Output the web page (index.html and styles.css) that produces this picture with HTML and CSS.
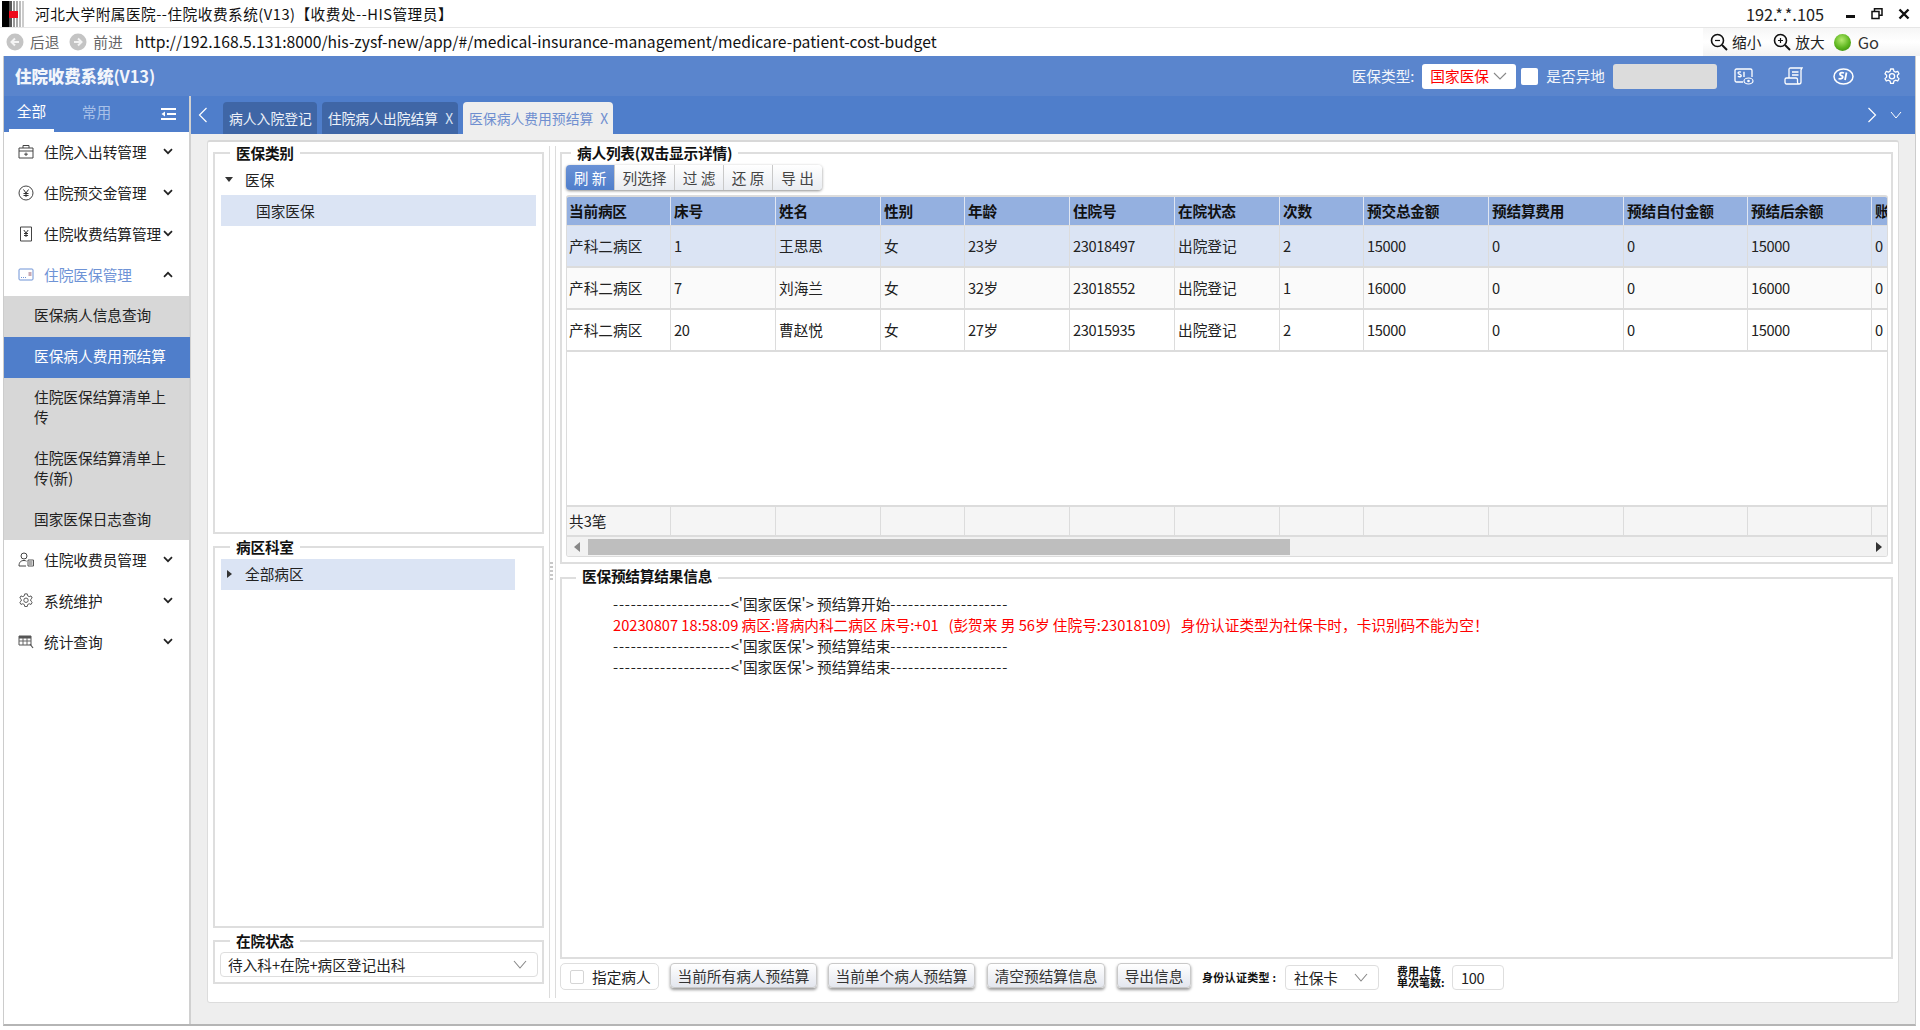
FILE: index.html
```html
<!DOCTYPE html>
<html lang="zh">
<head>
<meta charset="utf-8">
<title>住院收费系统</title>
<link rel="stylesheet" href="styles.css">
</head>
<body>
<div class="titlebar">
  <svg class="logo" width="24" height="26" viewBox="0 0 24 26"><rect x="0" y="0" width="7" height="26" fill="#000"/><rect x="7" width="3" height="26" fill="#555"/><rect x="11" width="2" height="26" fill="#999"/><rect x="14" width="2" height="26" fill="#aaa"/><rect x="17" width="2" height="26" fill="#bbb"/><rect x="20" width="2" height="26" fill="#ccc"/><rect x="7" y="10" width="9" height="7" fill="#ee0a1c"/></svg>
  <span class="win-title">河北大学附属医院--住院收费系统(V13)【收费处--HIS管理员】</span>
  <span class="win-ip">192.*.*.105</span>
  <div class="win-ctrl">
    <svg width="10" height="10" viewBox="0 0 10 10"><rect x="0" y="6" width="9" height="3" fill="#111"/></svg>
    <svg width="12" height="12" viewBox="0 0 12 12"><path d="M3.5 3V.8h7.500v6.500H8.500M1 3.500h7v7H1z" fill="none" stroke="#111" stroke-width="1.500"/></svg>
    <svg width="12" height="12" viewBox="0 0 12 12"><path d="M1.500 1.500l9 9M10.500 1.500l-9 9" stroke="#111" stroke-width="2.400"/></svg>
  </div>
</div>
<div class="addrbar">
  <div class="nav-item"><svg width="18" height="18" viewBox="0 0 18 18"><circle cx="9" cy="9" r="8.500" fill="#c4c4c4"/><path d="M13 9H6M9 5.500L5.500 9 9 12.500" fill="none" stroke="#f4f4f4" stroke-width="2"/></svg><span>后退</span></div>
  <div class="nav-item"><svg width="18" height="18" viewBox="0 0 18 18"><circle cx="9" cy="9" r="8.500" fill="#c4c4c4"/><path d="M5 9h7M9 5.500L12.500 9 9 12.500" fill="none" stroke="#f4f4f4" stroke-width="2"/></svg><span>前进</span></div>
  <span class="url">http://192.168.5.131:8000/his-zysf-new/app/#/medical-insurance-management/medicare-patient-cost-budget</span>
  <div class="addr-tools">
    <svg width="18" height="18" viewBox="0 0 18 18"><circle cx="7.500" cy="7.500" r="6" fill="none" stroke="#111" stroke-width="1.600"/><path d="M12 12l5 5" stroke="#111" stroke-width="2"/><path d="M5 7.500h5" stroke="#111" stroke-width="1.200"/></svg><span class="tool-label">缩小</span>
    <svg class="tool-gap" width="18" height="18" viewBox="0 0 18 18"><circle cx="7.500" cy="7.500" r="6" fill="none" stroke="#111" stroke-width="1.600"/><path d="M12 12l5 5" stroke="#111" stroke-width="2"/><path d="M5 7.500h5M7.500 5v5" stroke="#111" stroke-width="1.200"/></svg><span class="tool-label">放大</span>
    <span class="go-ball"></span><span class="tool-go">Go</span>
  </div>
</div>
<div class="app">
  <header class="app-head">
    <div class="app-title"><b>住院收费系统</b>(V13)</div>
    <div class="head-right">
      <span class="head-label">医保类型:</span>
      <div class="head-select"><span>国家医保</span><svg width="14" height="8" viewBox="0 0 14 8"><path d="M1 1l6 6 6-6" fill="none" stroke="#888" stroke-width="1.100"/></svg></div>
      <span class="head-check"></span>
      <span class="head-label">是否异地</span>
      <span class="head-input"></span>
      <svg class="head-icon first" width="20" height="17" viewBox="0 0 20 17"><path d="M9 14H2.500A1.500 1.500 0 0 1 1 12.500v-10A1.500 1.500 0 0 1 2.500 1h14A1.500 1.500 0 0 1 18 2.500V9" fill="none" stroke="#fff" stroke-width="1.300"/><ellipse cx="14.500" cy="13" rx="4.500" ry="3" fill="#5a85cd" stroke="#fff" stroke-width="1.200"/><circle cx="14.500" cy="13" r="1.300" fill="#fff"/><path d="M7 4.200C5 3.400 3.800 4.200 4.200 5.300c.5 1.100 2.800 1 3 2.200.2 1.200-1.700 1.700-3.400.9M10 3.800v5.200" fill="none" stroke="#fff" stroke-width="1.400"/></svg>
      <svg class="head-icon" width="19" height="18" viewBox="0 0 19 18"><path d="M5 11V2.500C5 1.500 5.500 1 6.500 1H18l-1 2v12c0 1.500-1 2-2 2H2.500C1.500 17 1 16 1 15v-2.500c0-1 .5-1.500 1.500-1.500H12c1 0 1.500.5 1.500 1.500V15c0 1 .5 2 1.500 2" fill="none" stroke="#fff" stroke-width="1.300"/><path d="M8 5h6.500M8 8h6.500" stroke="#fff" stroke-width="1.300"/></svg>
      <svg class="head-icon" width="21" height="17" viewBox="0 0 21 17"><ellipse cx="10.500" cy="8.500" rx="9.500" ry="7.500" fill="none" stroke="#fff" stroke-width="1.500"/><path d="M11 5C8.500 4 6.500 5 7 6.500c.4 1.300 3 1.200 2.800 2.700C9.600 10.800 7 11.200 5.500 10.500M13.500 4.500L12 12" fill="none" stroke="#fff" stroke-width="1.800"/></svg>
      <svg class="head-icon" width="16" height="17" viewBox="0 0 16 17"><path d="M6.600 1h2.800l.5 2.200 1.700.9 2.100-.8 1.300 2.400-1.600 1.500v1.900l1.600 1.500-1.300 2.400-2.100-.8-1.700.9-.5 2.200H6.600l-.5-2.200-1.700-.9-2.100.8L1 10.600l1.600-1.500V7.200L1 5.700l1.300-2.400 2.100.8 1.700-.9z" fill="none" stroke="#fff" stroke-width="1.300" stroke-linejoin="round"/><circle cx="8" cy="8.200" r="2.600" fill="none" stroke="#fff" stroke-width="1.300"/></svg>
    </div>
  </header>
  <div class="app-body">
    <aside class="sidebar">
      <div class="side-tabs">
        <span class="side-tab on">全部</span>
        <span class="side-tab">常用</span>
        <svg class="side-burger" width="15" height="14" viewBox="0 0 15 14"><path d="M0 2h15M6 7h9M0 12h15" stroke="#fff" stroke-width="2"/><path d="M4 4.500L0.500 7 4 9.500z" fill="#fff"/></svg>
      </div>
      <nav class="menu">
        <div class="menu-item">
          <svg class="menu-icon" width="16" height="15" viewBox="0 0 16 15"><path d="M1 4h14v10H1zM5 4V1.500h6V4M1 7h14M8 8.500v3.500M6.200 10.200h3.600" fill="none" stroke="#444" stroke-width="1"/></svg>
          <span>住院入出转管理</span>
          <svg class="menu-chev" width="10" height="7" viewBox="0 0 10 7"><path d="M1 1.200l4 4 4-4" fill="none" stroke="#222" stroke-width="1.700"/></svg>
        </div>
        <div class="menu-item">
          <svg class="menu-icon" width="16" height="16" viewBox="0 0 16 16"><circle cx="8" cy="8" r="7" fill="none" stroke="#444" stroke-width="1"/><path d="M5.500 4.500L8 8l2.500-3.500M8 8v4M5.500 8.500h5M5.500 10.500h5" fill="none" stroke="#333" stroke-width="1"/></svg>
          <span>住院预交金管理</span>
          <svg class="menu-chev" width="10" height="7" viewBox="0 0 10 7"><path d="M1 1.200l4 4 4-4" fill="none" stroke="#222" stroke-width="1.700"/></svg>
        </div>
        <div class="menu-item">
          <svg class="menu-icon" width="16" height="16" viewBox="0 0 16 16"><path d="M2.500 1h11v14h-11z" fill="none" stroke="#444" stroke-width="1"/><path d="M5.800 4L8 7l2.200-3M8 7v4M6 7.500h4M6 9.500h4" fill="none" stroke="#333" stroke-width="1"/></svg>
          <span>住院收费结算管理</span>
          <svg class="menu-chev" width="10" height="7" viewBox="0 0 10 7"><path d="M1 1.200l4 4 4-4" fill="none" stroke="#222" stroke-width="1.700"/></svg>
        </div>
        <div class="menu-item open">
          <svg class="menu-icon" width="16" height="13" viewBox="0 0 16 13"><rect x="1" y="1" width="14" height="11" rx="1" fill="none" stroke="#6e93d6" stroke-width="1"/><path d="M3 9.500h5" stroke="#6e93d6" stroke-dasharray="1 1"/><rect x="10.500" y="4" width="3" height="4" fill="#c8a9b4"/></svg>
          <span>住院医保管理</span>
          <svg class="menu-chev" width="10" height="7" viewBox="0 0 10 7"><path d="M1 5.800l4-4 4 4" fill="none" stroke="#222" stroke-width="1.700"/></svg>
        </div>
        <div class="submenu">
          <div class="sub-item">医保病人信息查询</div>
          <div class="sub-item on">医保病人费用预结算</div>
          <div class="sub-item">住院医保结算清单上传</div>
          <div class="sub-item">住院医保结算清单上传(新)</div>
          <div class="sub-item last">国家医保日志查询</div>
        </div>
        <div class="menu-item">
          <svg class="menu-icon" width="16" height="15" viewBox="0 0 16 15"><circle cx="6" cy="4" r="3" fill="none" stroke="#444" stroke-width="1"/><path d="M1 14c0-4 2-5.500 5-5.500 1 0 2 .2 2.500.7M1 14h7" fill="none" stroke="#444" stroke-width="1"/><path d="M10 8h5.500v6H10zM11 10h3.500M11 12h3.500" fill="none" stroke="#555" stroke-width="1"/></svg>
          <span>住院收费员管理</span>
          <svg class="menu-chev" width="10" height="7" viewBox="0 0 10 7"><path d="M1 1.200l4 4 4-4" fill="none" stroke="#222" stroke-width="1.700"/></svg>
        </div>
        <div class="menu-item">
          <svg class="menu-icon" width="15" height="15" viewBox="0 0 16 17"><path d="M6.600 1h2.800l.5 2.200 1.700.9 2.100-.8 1.300 2.400-1.600 1.500v1.900l1.600 1.500-1.300 2.400-2.100-.8-1.700.9-.5 2.200H6.600l-.5-2.200-1.700-.9-2.100.8L1 10.600l1.600-1.500V7.200L1 5.700l1.300-2.400 2.100.8 1.700-.9z" fill="none" stroke="#555" stroke-width="1.100"/><circle cx="8" cy="8.200" r="2.500" fill="none" stroke="#555" stroke-width="1.100"/></svg>
          <span>系统维护</span>
          <svg class="menu-chev" width="10" height="7" viewBox="0 0 10 7"><path d="M1 1.200l4 4 4-4" fill="none" stroke="#222" stroke-width="1.700"/></svg>
        </div>
        <div class="menu-item">
          <svg class="menu-icon" width="16" height="14" viewBox="0 0 16 14"><path d="M1 1h12v9H1z" fill="none" stroke="#555" stroke-width="1"/><path d="M1 1h12v2.500H1z" fill="#555"/><path d="M1 6h12M5 3v7M9 3v7" stroke="#666" stroke-width="1"/><path d="M12 9l3 4" stroke="#555" stroke-width="1.200"/></svg>
          <span>统计查询</span>
          <svg class="menu-chev" width="10" height="7" viewBox="0 0 10 7"><path d="M1 1.200l4 4 4-4" fill="none" stroke="#222" stroke-width="1.700"/></svg>
        </div>
      </nav>
    </aside>
    <main class="main">
      <div class="tabstrip">
        <svg class="tab-prev" width="10" height="16" viewBox="0 0 10 16"><path d="M8.500 1L1.500 8l7 7" fill="none" stroke="#fff" stroke-width="1.200"/></svg>
        <div class="tab">病人入院登记</div>
        <div class="tab">住院病人出院结算<i>X</i></div>
        <div class="tab active">医保病人费用预结算<i>X</i></div>
        <div class="tab-end">
          <svg width="10" height="16" viewBox="0 0 10 16"><path d="M1.500 1l7 7-7 7" fill="none" stroke="#fff" stroke-width="1.200"/></svg>
          <svg width="12" height="8" viewBox="0 0 12 8"><path d="M1 1l5 6 5-6" fill="none" stroke="#fff" stroke-width="1"/></svg>
        </div>
      </div>
      <div class="card">
        <div class="col-left">
          <section class="group g-type">
            <h3 class="legend">医保类别</h3>
            <div class="tree-row"><span class="tri-down"></span><span>医保</span></div>
            <div class="tree-row sel indent">国家医保</div>
          </section>
          <section class="group g-ward">
            <h3 class="legend">病区科室</h3>
            <div class="ward-row"><span class="tri-right"></span><span>全部病区</span></div>
          </section>
          <section class="group g-state">
            <h3 class="legend">在院状态</h3>
            <div class="field state-field"><span>待入科+在院+病区登记出科</span><svg width="14" height="9" viewBox="0 0 14 9"><path d="M1 1l6 7 6-7" fill="none" stroke="#888" stroke-width="1.100"/></svg></div>
          </section>
        </div>
        <div class="splitter"><span class="grip"></span></div>
        <div class="col-right">
          <section class="group g-list">
            <h3 class="legend">病人列表(双击显示详情)</h3>
            <div class="toolbar">
              <button class="tb on w1">刷 新</button><button class="tb w2">列选择</button><button class="tb w1">过 滤</button><button class="tb w1">还 原</button><button class="tb w1">导 出</button>
            </div>
            <div class="grid">
              <div class="g-row head"><span>当前病区</span><span>床号</span><span>姓名</span><span>性别</span><span>年龄</span><span>住院号</span><span>在院状态</span><span>次数</span><span>预交总金额</span><span>预结算费用</span><span>预结自付金额</span><span>预结后余额</span><span>账</span></div>
              <div class="g-row r1"><span>产科二病区</span><span class="num">1</span><span>王思思</span><span>女</span><span class="num">23岁</span><span class="num">23018497</span><span>出院登记</span><span class="num">2</span><span class="num">15000</span><span class="num">0</span><span class="num">0</span><span class="num">15000</span><span class="num">0</span></div>
              <div class="g-row r2"><span>产科二病区</span><span class="num">7</span><span>刘海兰</span><span>女</span><span class="num">32岁</span><span class="num">23018552</span><span>出院登记</span><span class="num">1</span><span class="num">16000</span><span class="num">0</span><span class="num">0</span><span class="num">16000</span><span class="num">0</span></div>
              <div class="g-row r3"><span>产科二病区</span><span class="num">20</span><span>曹赵悦</span><span>女</span><span class="num">27岁</span><span class="num">23015935</span><span>出院登记</span><span class="num">2</span><span class="num">15000</span><span class="num">0</span><span class="num">0</span><span class="num">15000</span><span class="num">0</span></div>
              <div class="g-empty"></div>
              <div class="g-row sum"><span>共3笔</span><span></span><span></span><span></span><span></span><span></span><span></span><span></span><span></span><span></span><span></span><span></span><span></span></div>
              <div class="hscroll">
                <svg width="6" height="10" viewBox="0 0 6 10"><path d="M6 0v10L0 5z" fill="#888"/></svg>
                <div class="thumb-track"><div class="thumb"></div></div>
                <svg width="6" height="10" viewBox="0 0 6 10"><path d="M0 0v10l6-5z" fill="#333"/></svg>
              </div>
            </div>
          </section>
          <section class="group g-log">
            <h3 class="legend">医保预结算结果信息</h3>
            <div class="log">
              <div class="log-line"><span class="dash">--------------------</span>&lt;'国家医保'&gt; 预结算开始<span class="dash">--------------------</span></div>
              <div class="log-line err">20230807 18:58:09 病区:肾病内科二病区 床号:+01   (彭贺来 男 56岁 住院号:23018109)   身份认证类型为社保卡时，卡识别码不能为空！</div>
              <div class="log-line"><span class="dash">--------------------</span>&lt;'国家医保'&gt; 预结算结束<span class="dash">--------------------</span></div>
              <div class="log-line"><span class="dash">--------------------</span>&lt;'国家医保'&gt; 预结算结束<span class="dash">--------------------</span></div>
            </div>
          </section>
          <div class="actions">
            <label class="assign"><span class="box"></span><span>指定病人</span></label>
            <button class="act a1">当前所有病人预结算</button>
            <button class="act a1">当前单个病人预结算</button>
            <button class="act a2">清空预结算信息</button>
            <button class="act a3">导出信息</button>
            <span class="small-label">身份认证类型 :</span>
            <div class="field id-field"><span>社保卡</span><svg width="14" height="9" viewBox="0 0 14 9"><path d="M1 1l6 7 6-7" fill="none" stroke="#888" stroke-width="1.100"/></svg></div>
            <span class="wrap-label">费用上传单次笔数:</span>
            <div class="field num-field num">100</div>
          </div>
        </div>
      </div>
    </main>
  </div>
</div>
</body>
</html>
```
FILE: styles.css
```css
* { box-sizing: border-box; }
html, body { margin: 0; padding: 0; }
body {
  width: 1920px;
  height: 1030px;
  overflow: hidden;
  background: #fff;
  color: #222;
  font-family: "Noto Sans CJK SC", "Liberation Sans", sans-serif;
  font-size: 14.67px;
  line-height: 20px;
}
.num { letter-spacing: -0.4px; }
h3 { margin: 0; }

/* window chrome */
.titlebar { height: 28px; display: flex; align-items: center; padding-left: 2px; border-bottom: 1px solid #e6e6e6; }
.logo { flex: none; }
.win-title { margin-left: 9px; color: #111; letter-spacing: 0.5px; }
.win-ip { margin-left: auto; color: #222; font-size: 16.3px; }
.win-ctrl { display: flex; align-items: center; gap: 15px; margin: 0 10px 0 22px; }

.addrbar { height: 28px; margin-left: 4px; display: flex; align-items: center; padding-left: 2px; }
.nav-item { display: flex; align-items: center; gap: 6px; color: #666; margin-right: 10px; }
.url { margin-left: 2px; color: #111; font-size: 15.7px; white-space: nowrap; }
.addr-tools { margin-left: auto; height: 28px; width: 217px; padding-left: 7px; display: flex; align-items: center; background: linear-gradient(#f6f6f6, #fff 50%, #f2f2f2); }
.tool-label { margin-left: 4px; color: #222; }
.tool-gap { margin-left: 12px; }
.go-ball { width: 17px; height: 17px; border-radius: 50%; margin-left: 9px; background: radial-gradient(circle at 45% 35%, #b5ea70, #5cb51e 55%, #2f7d0a); }
.tool-go { margin-left: 7px; font-size: 16.5px; color: #333; }

/* app shell */
.app { width: 1913px; height: 970px; margin-left: 3px; border-left: 1px solid #ccc; border-right: 1px solid #ccc; border-bottom: 2px solid #b5b5b5; display: flex; flex-direction: column; background: #eee; }
.app-head { height: 40px; flex: none; background: #5a85cd; display: flex; align-items: center; padding-left: 11px; color: #fff; }
.app-title { font-size: 16.5px; letter-spacing: -0.1px; color: #f2f5fb; font-weight: 700; }
.head-right { margin-left: auto; display: flex; align-items: center; }
.head-label { color: #f2f5fb; }
.head-select { width: 94px; height: 25px; margin-left: 8px; background: #fff; border-radius: 3px; color: #f00; display: flex; align-items: center; justify-content: space-between; padding: 0 9px 0 8px; }
.head-check { width: 17px; height: 17px; background: #fff; border-radius: 2px; margin: 0 8px 0 5px; }
.head-input { width: 104px; height: 25px; margin-left: 8px; background: #dcdcdc; border-radius: 3px; }
.head-icon { margin-left: 30px; }
.head-icon.first { margin-left: 17px; }
.head-right > svg:last-child { margin-right: 15px; }

.app-body { flex: 1; display: flex; min-height: 0; }

/* sidebar */
.sidebar { width: 187px; flex: none; background: #fff; border-right: 2px solid #d0d0d0; display: flex; flex-direction: column; }
.side-tabs { height: 36px; flex: none; background: #4f7ecb; display: flex; align-items: stretch; position: relative; padding-left: 5px; }
.side-tab { width: 45px; margin-right: 20px; display: flex; align-items: center; justify-content: center; padding-bottom: 4px; color: #a9c1e8; }
.side-tab.on { color: #fff; border-bottom: 3px solid #fff; }
.side-burger { position: absolute; left: 157px; top: 11px; }
.menu { flex: 1; background: #fff; }
.menu-item { height: 41px; display: flex; align-items: center; padding: 0 0 2px 14px; position: relative; color: #222; }
.menu-item span { margin-left: 10px; }
.menu-icon { width: 16px; flex: none; }
.menu-chev { position: absolute; left: 159px; top: 16px; }
.menu-item.open { color: #6e93d6; }
.submenu { background: #d7d7d7; }
.sub-item { padding: 9px 16px 12px 30px; width: 186px; color: #222; }
.sub-item.on { background: #4f7ecb; color: #fff; }
.sub-item.last { padding-bottom: 11px; }

/* main */
.main { flex: 1; min-width: 0; display: flex; flex-direction: column; }
.tabstrip { height: 38px; flex: none; background: #4f7ecb; display: flex; align-items: flex-end; padding-left: 7px; gap: 5px; }
.tab-prev { align-self: center; margin-right: 10px; }
.tab { height: 32px; padding: 0 5px 0 6px; border-radius: 4px 4px 0 0; background: #3f66a6; color: #eef2f9; display: flex; align-items: center; font-size: 13.8px; white-space: nowrap; }
.tab i { font-style: normal; margin-left: 7px; color: #d9e2f2; }
.tab.active { background: #eee; color: #6f8fd0; }
.tab.active i { color: #6f8fd0; }
.tab-end { margin-left: auto; align-self: center; display: flex; align-items: center; gap: 13px; padding-right: 13px; }

.card { width: 1692px; height: 863px; margin: 6px 0 0 16px; background: #fff; border: 1px solid #dcdcdc; border-top: 2px solid #d8d8d8; border-radius: 3px; display: flex; padding: 10px 5px 0 5px; }
.col-left { width: 331px; flex: none; display: flex; flex-direction: column; gap: 12px; }
.splitter { width: 16px; flex: none; margin-top: -6px; height: 852px; position: relative; }
.splitter::before { content: ""; position: absolute; left: 5px; top: 0; bottom: 0; width: 5px; border-left: 1px solid #dcdcdc; border-right: 1px solid #dcdcdc; }
.grip { position: absolute; left: 6px; top: 416px; width: 3px; height: 18px; background: repeating-linear-gradient(#c8c8c8 0 2px, #fff 2px 4px); }
.col-right { flex: 1; min-width: 0; display: flex; flex-direction: column; }

.group { position: relative; border: 2px solid #dedede; background: #fff; }
.legend { position: absolute; left: 15px; top: -11px; padding: 0 6px; background: #fff; font-size: 14.67px; font-weight: 700; color: #111; line-height: 20px; white-space: nowrap; letter-spacing: -0.2px; }
.g-list .legend { left: 9px; }
.g-log .legend { left: 14px; top: -13px; }
.g-type { height: 382px; padding: 10px 6px 0 6px; }
.g-ward { height: 382px; padding: 11px 0 0 6px; }
.g-state { height: 44px; padding: 10px 4px 0 5px; }

.tree-row { height: 31px; display: flex; align-items: center; }
.tree-row.sel { background: #dbe4f4; }
.tree-row.indent { padding-left: 35px; }
.tri-down { width: 0; height: 0; border: 4px solid transparent; border-top: 5px solid #333; border-bottom: 0; margin: 0 12px 0 4px; }
.tri-right { width: 0; height: 0; border: 4px solid transparent; border-left: 5px solid #333; border-right: 0; margin: 0 13px 0 6px; }
.ward-row { height: 31px; width: 294px; padding-bottom: 2px; background: #dbe4f4; display: flex; align-items: center; }

.field { border: 1px solid #dedede; border-radius: 4px; background: #fff; display: flex; align-items: center; justify-content: space-between; }
.state-field { height: 25px; padding: 0 10px 0 7px; }

.g-list { height: 412px; padding: 11px 5px 0 4px; }
.toolbar { display: flex; height: 25px; width: max-content; border-radius: 4px; box-shadow: 0 1px 3px rgba(0,0,0,.45); }
.tb { height: 25px; padding: 0; border: 0; border-right: 1px solid #c9c9c9; background: linear-gradient(#fff, #e9ecf1); color: #444; font: inherit; }
.tb.on { background: linear-gradient(#6a92d6, #4f7ecb); color: #fff; border-radius: 4px 0 0 4px; }
.tb:last-child { border-radius: 0 4px 4px 0; border-right: 0; width: 50px; }
.tb.w1 { width: 49px; }
.tb.w2 { width: 60px; }
.grid { margin-top: 5px; width: 1322px; height: 362px; border: 1px solid #dcdcdc; border-top: 2px solid #dcdcdc; border-radius: 3px; display: flex; flex-direction: column; overflow: hidden; }
.g-row { display: grid; grid-template-columns: 104px 105px 105px 84px 105px 105px 105px 84px 125px 135px 124px 124px 15px; flex: none; height: 42px; border-bottom: 2px solid #dcdcdc; }
.g-row span { padding: 0 2px 0 3px; display: flex; align-items: center; border-right: 1px solid #dcdcdc; white-space: nowrap; overflow: hidden; color: #222; }
.g-row span:first-child { padding-left: 2px; }
.g-row span:last-child { border-right: 0; }
.g-row.head { height: 29px; background: #94b0e0; border-bottom: 1px solid #dcdcdc; }
.g-row.head span { font-weight: 700; color: #111; letter-spacing: -0.2px; border-right-color: #e0e6f2; }
.r1 { background: #dbe4f4; }
.r2 { background: #fafafa; }
.r3 { background: #fff; }
.g-empty { flex: 1; }
.g-row.sum { height: 32px; background: #f5f5f5; border-top: 2px solid #dcdcdc; }
.hscroll { height: 19px; flex: none; background: #f2f2f2; display: flex; align-items: center; padding: 0 5px 0 7px; gap: 8px; }
.thumb-track { flex: 1; height: 16px; }
.thumb { width: 702px; height: 100%; background: #bebebe; }

.g-log { height: 382px; margin-top: 13px; padding: 14px 0 0 51px; }
.log { line-height: 21px; color: #222; }
.log-line { white-space: pre; }
.dash { letter-spacing: 0.8px; }
.log .err { color: #f00; }

.actions { display: flex; align-items: flex-start; margin-top: 4px; }
.assign { width: 99px; height: 27px; border: 1px solid #dedede; border-radius: 5px; display: flex; align-items: center; padding-left: 9px; gap: 8px; }
.box { width: 14px; height: 14px; border: 1px solid #d5d5d5; border-radius: 2px; background: #fff; }
.act { height: 25px; padding: 0; margin-left: 11px; border: 1px solid #c9c9c9; border-radius: 4px; background: linear-gradient(#fff, #e3e6ee); color: #333; font: inherit; box-shadow: 0 2px 3px rgba(0,0,0,.4); }
.a1 { width: 147px; }
.a2 { width: 118px; margin-left: 12px; }
.a3 { width: 74px; margin-left: 12px; }
.small-label { margin-left: 11px; margin-top: 4px; font-size: 11px; letter-spacing: 0.3px; color: #111; font-weight: 700; white-space: nowrap; width: 83px; }
.id-field { width: 94px; height: 25px; margin-top: 2px; padding: 0 10px 0 8px; }
.wrap-label { width: 48px; margin: 3px 7px 0 18px; font-size: 11px; line-height: 11px; color: #111; font-weight: 700; }
.num-field { width: 52px; height: 25px; margin-top: 2px; padding-left: 8px; justify-content: flex-start; }
```
